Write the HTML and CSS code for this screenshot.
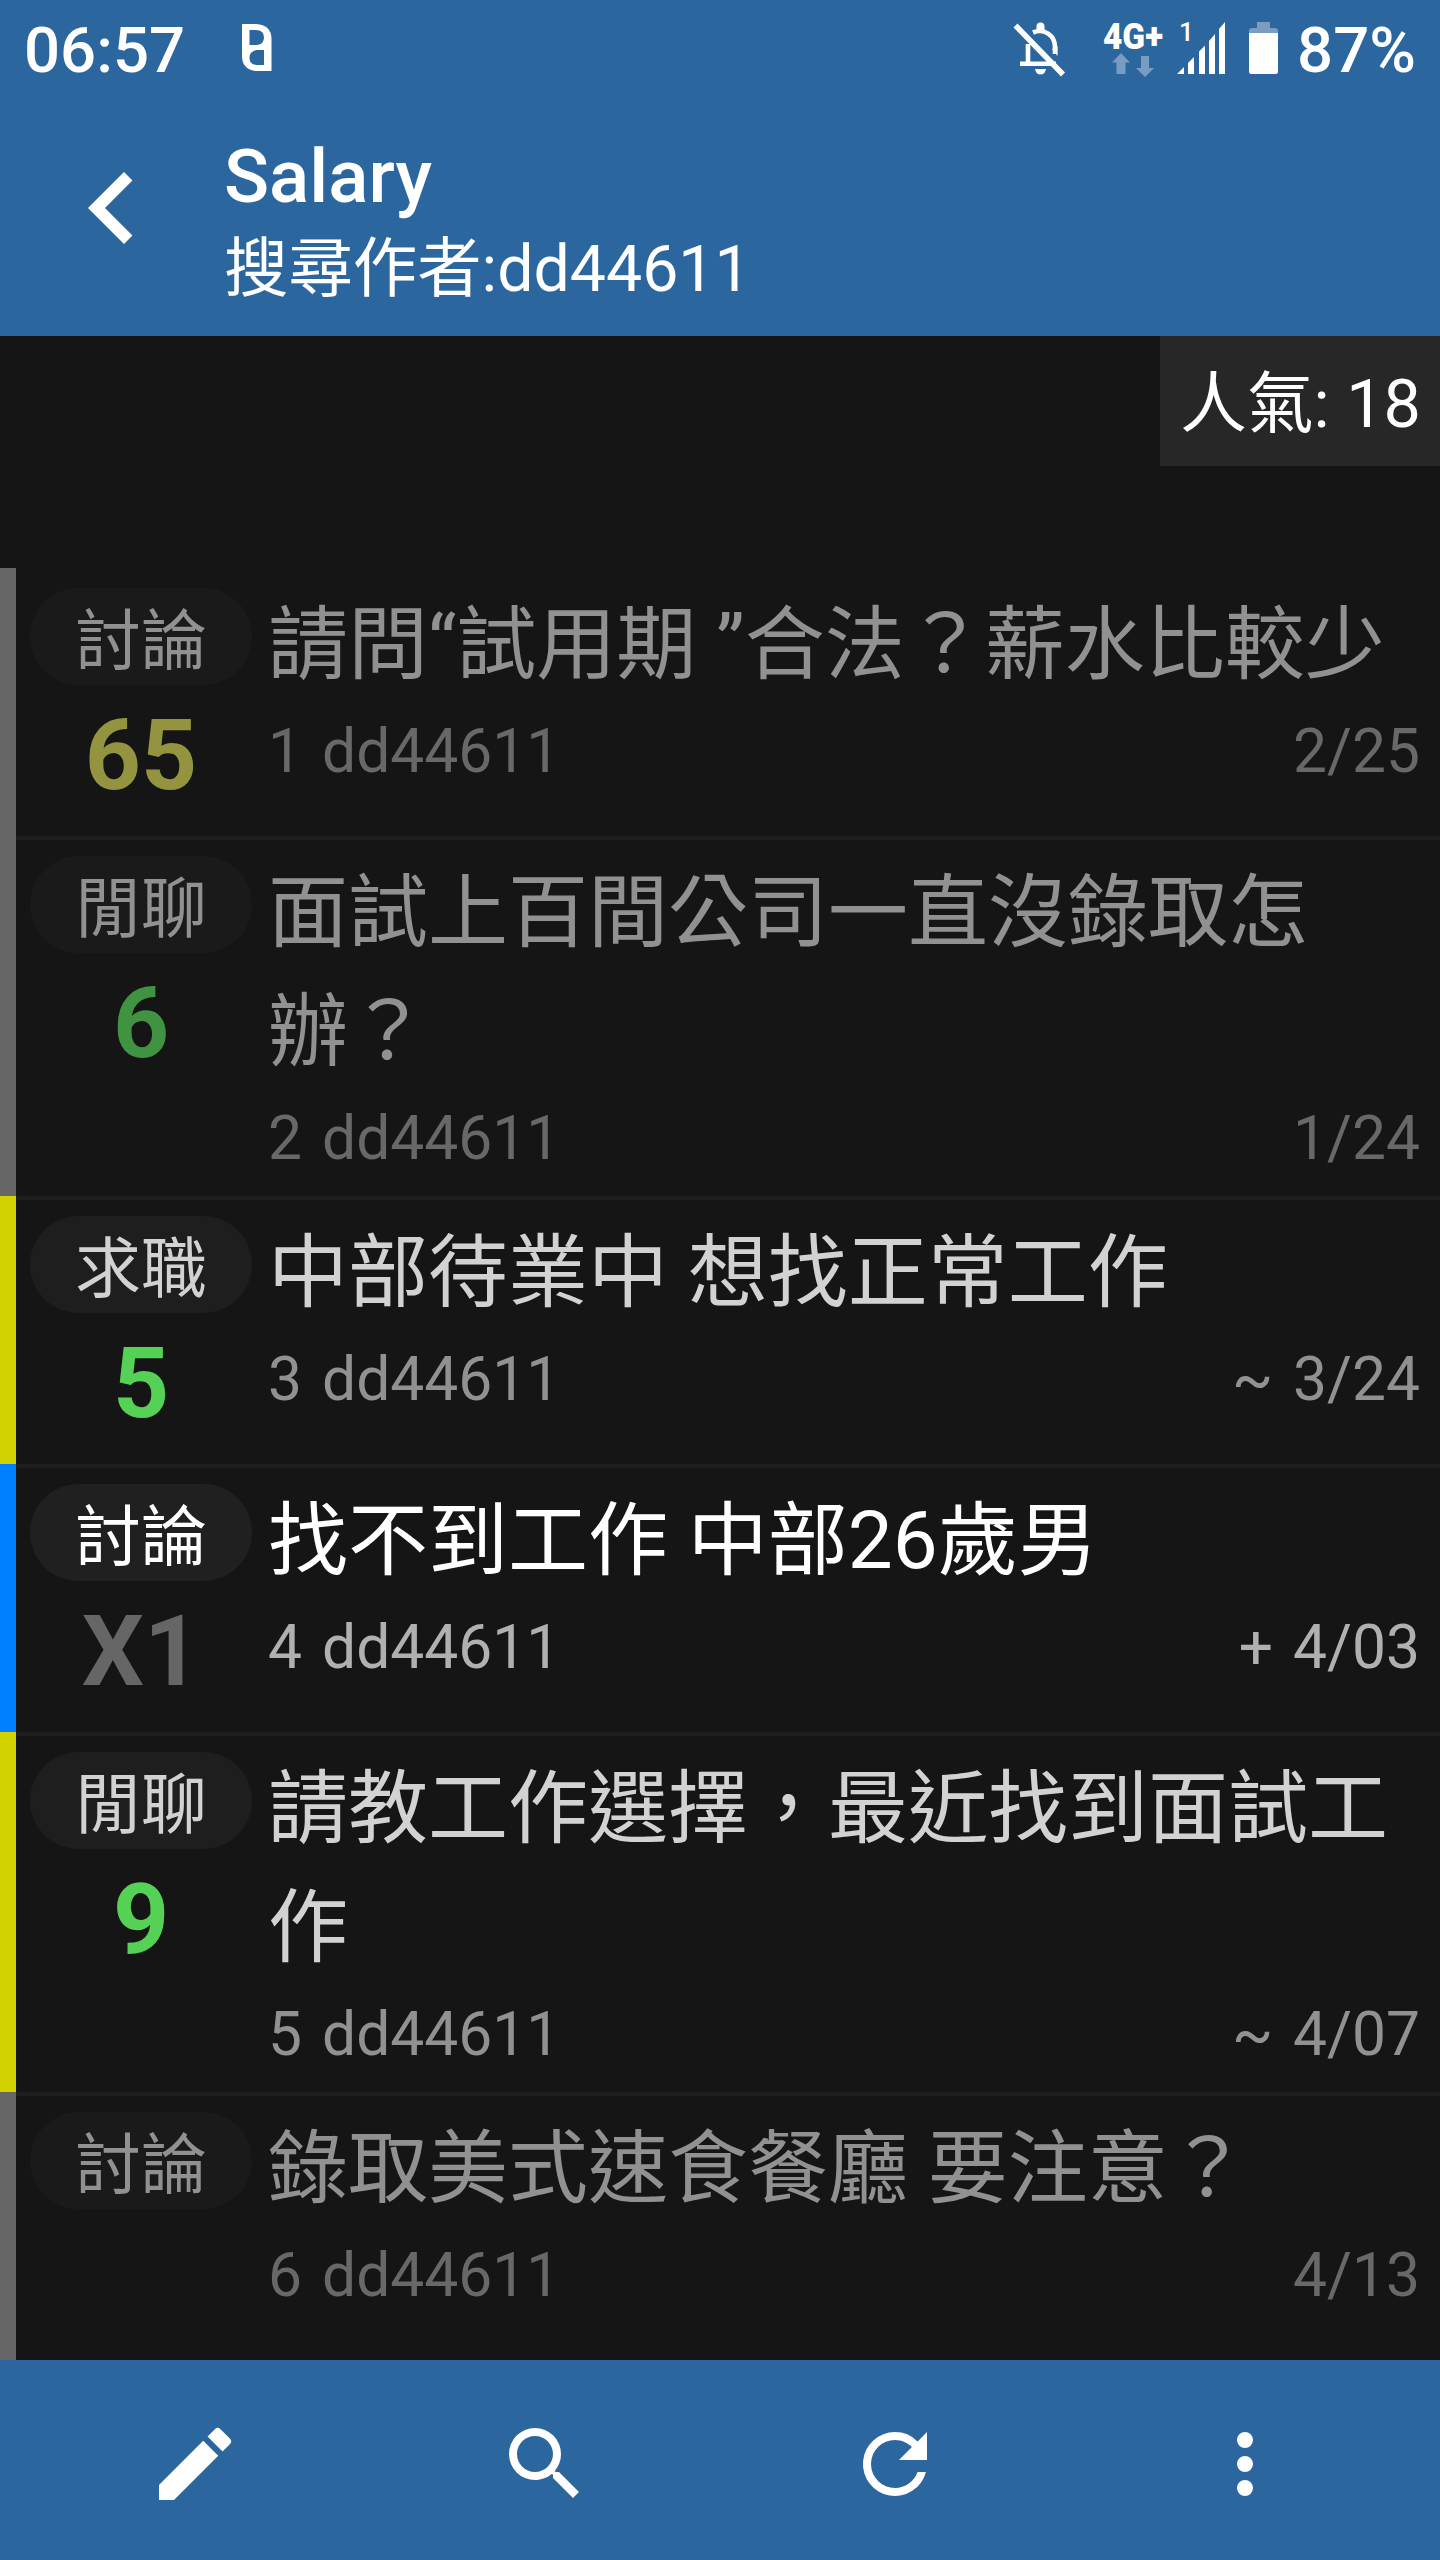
FILE: index.html
```html
<!DOCTYPE html>
<html lang="zh-Hant">
<head>
<meta charset="utf-8">
<title>Salary</title>
<link rel="stylesheet" href="styles.css">
</head>
<body>
<div class="app">
  <div class="status">
    <span class="status-text">06:57</span>
    <svg class="notice" width="30" height="48" viewBox="0 0 30 48"><path fill="#fff" fill-rule="evenodd" d="M0 0H14Q29.500 1 29.500 15V47H15Q0 46 0 32ZM7.500 6V21H15Q22 20 22 13.500Q22 6 14 6ZM22 26H15Q7.500 27 7.500 33.500Q7.500 41 15 41H22Z"/></svg>
    <svg class="bell" width="54" height="56" viewBox="0 0 54 56">
      <g fill="none" stroke="#fff" stroke-width="4.600"><path d="M15 22V41M7 41.700H43M20 10.500C31 6 42 13 42 25V32"/><path stroke-width="5.500" d="M2.500 3.500L50 52.500"/></g>
      <path fill="#fff" d="M23.500 10V4.500a4 4 0 0 1 8 0V10ZM22 47H33Q32 52.500 27.500 52.500T22 47ZM39 27L44.500 34V24Z"/>
    </svg>
    <svg class="network" width="65" height="72" viewBox="-2 -16 65 72">
      <text class="net-label" x="0" y="27" textLength="60" lengthAdjust="spacingAndGlyphs">4G+</text>
      <path fill="#799dc2" d="M18 31L27 40.500H22.500V52H13.500V40.500H9ZM38 34H46V46H51L42 55L33 46H38Z"/>
    </svg>
    <svg class="signal" width="49" height="61" viewBox="0 -8 49 61">
      <text class="sim-label" x="2" y="19">1</text>
      <path fill="#fff" d="M0 52L7 45V52ZM11 41L17 35V52H11ZM22 29.500L28 23.500V52H22ZM32 19L38 12V52H32ZM42 7L48 0V52H42Z"/>
    </svg>
    <svg class="battery" width="30" height="53" viewBox="0 0 30 53"><path fill="#799dc2" d="M8 0H21V6H26Q29 6 29 9V12H0V9Q0 6 3 6H8Z"/><path fill="#fff" d="M0 11H29V49.500Q29 52 26.500 52H2.500Q0 52 0 49.500Z"/></svg>
    <span class="status-text">87%</span>
  </div>
  <header class="header">
    <svg class="back" width="144" height="144" viewBox="0 0 24 24"><path fill="#fff" d="M15.410 7.410L14 6l-6 6 6 6 1.410-1.410L10.830 12z"/></svg>
    <div class="heading">
      <h1 class="board">Salary</h1>
      <div class="query">搜尋作者:dd44611</div>
    </div>
  </header>
  <main class="content">
    <div class="popularity">人氣: 18</div>
    <div class="list">
      <article class="row read">
        <div class="side"><span class="tag">討論</span><span class="count yellow">65</span></div>
        <div class="body"><h2 class="title">請問“試用期 ”合法？薪水比較少</h2><div class="meta"><span>1</span><span>dd44611</span><span class="date">2/25</span></div></div>
      </article>
      <article class="row read">
        <div class="side"><span class="tag">閒聊</span><span class="count green">6</span></div>
        <div class="body"><h2 class="title">面試上百間公司一直沒錄取怎辦？</h2><div class="meta"><span>2</span><span>dd44611</span><span class="date">1/24</span></div></div>
      </article>
      <article class="row updated">
        <div class="side"><span class="tag">求職</span><span class="count green">5</span></div>
        <div class="body"><h2 class="title">中部待業中 想找正常工作</h2><div class="meta"><span>3</span><span>dd44611</span><span class="mark">~</span><span>3/24</span></div></div>
      </article>
      <article class="row unread">
        <div class="side"><span class="tag">討論</span><span class="count gray">X1</span></div>
        <div class="body"><h2 class="title">找不到工作 中部26歲男</h2><div class="meta"><span>4</span><span>dd44611</span><span class="mark">+</span><span>4/03</span></div></div>
      </article>
      <article class="row updated">
        <div class="side"><span class="tag">閒聊</span><span class="count green">9</span></div>
        <div class="body"><h2 class="title">請教工作選擇，最近找到面試工作</h2><div class="meta"><span>5</span><span>dd44611</span><span class="mark">~</span><span>4/07</span></div></div>
      </article>
      <article class="row read">
        <div class="side"><span class="tag">討論</span></div>
        <div class="body"><h2 class="title">錄取美式速食餐廳 要注意？</h2><div class="meta"><span>6</span><span>dd44611</span><span class="date">4/13</span></div></div>
      </article>
    </div>
  </main>
  <nav class="toolbar">
    <svg width="96" height="96" viewBox="0 0 24 24"><path d="M3 17.250V21h3.750L17.810 9.940l-3.750-3.750L3 17.250zM20.710 7.040a1 1 0 0 0 0-1.410l-2.340-2.340a1 1 0 0 0-1.410 0l-1.830 1.830 3.750 3.750 1.830-1.830z"/></svg>
    <svg width="96" height="96" viewBox="0 0 24 24"><path d="M15.500 14h-.79l-.28-.27A6.471 6.471 0 0 0 16 9.500 6.500 6.500 0 1 0 9.500 16c1.610 0 3.090-.59 4.230-1.570l.27.28v.79l5 4.990L20.490 19l-4.990-5zm-6 0C7.010 14 5 11.990 5 9.500S7.010 5 9.500 5 14 7.010 14 9.500 11.990 14 9.500 14z"/></svg>
    <svg width="96" height="96" viewBox="0 0 24 24"><path d="M17.650 6.350A7.958 7.958 0 0 0 12 4a8 8 0 1 0 7.730 10h-2.080A5.990 5.990 0 0 1 12 18a6 6 0 1 1 0-12c1.660 0 3.140.69 4.220 1.780L13 11h7V4l-2.350 2.350z"/></svg>
    <svg width="96" height="96" viewBox="0 0 24 24"><path d="M12 8a2 2 0 1 0 0-4 2 2 0 0 0 0 4zm0 2a2 2 0 1 0 0 4 2 2 0 0 0 0-4zm0 6a2 2 0 1 0 0 4 2 2 0 0 0 0-4z"/></svg>
  </nav>
</div>
</body>
</html>
```
FILE: styles.css
```css
* { box-sizing: border-box; }
body { margin: 0; background: #151515; }
svg { display: block; flex: none; }
.app {
  width: 1440px;
  height: 2560px;
  display: flex;
  flex-direction: column;
  overflow: hidden;
  color: #fff;
  font-family: Roboto, "Noto Sans CJK TC", sans-serif;
}

.status {
  height: 100px;
  padding: 0 24px 0 24px;
  display: flex;
  align-items: flex-start;
  background: #2b669e;
}
.status-text {
  font-size: 63.5px;
  font-weight: 500;
  line-height: 102px;
}
.notice { margin: 24px 0 0 57px; }
.bell { margin: 22px 0 0 auto; }
.network { margin: 6px 0 0 34px; }
.signal { margin: 14px 0 0 11px; }
.battery { margin: 22px 18px 0 23px; }
.net-label {
  fill: #fff;
  font-size: 37px;
  font-weight: 900;
}
.sim-label {
  fill: #fff;
  font-size: 26px;
  font-weight: 500;
}

.header {
  height: 236px;
  padding-left: 40px;
  display: flex;
  align-items: flex-start;
  background: #2b669e;
}
.back { margin-top: 36px; }
.heading { padding: 34px 0 0 40px; }
.board {
  margin: 0;
  font-size: 74.5px;
  font-weight: 500;
  line-height: 86px;
}
.query {
  margin-top: 3px;
  font-size: 64.4px;
  line-height: 92px;
}

.content {
  height: 2024px;
  display: flex;
  flex-direction: column;
}
.popularity {
  align-self: flex-end;
  width: 280px;
  height: 130px;
  padding-right: 19px;
  background: #272727;
  font-size: 66.6px;
  line-height: 137px;
  text-align: right;
  white-space: nowrap;
}
.list { margin-top: 102px; }

.row {
  min-height: 268px;
  padding: 0 20px 22px 14px;
  display: flex;
  border-left: 16px solid #666;
  box-shadow: inset 0 4px #1d1d1d;
}
.row:first-child { box-shadow: none; }
.side {
  width: 222px;
  padding-top: 20px;
  display: flex;
  flex-direction: column;
  align-items: stretch;
  text-align: center;
}
.tag {
  height: 97px;
  border-radius: 49px;
  font-size: 66px;
  line-height: 108px;
}
.count {
  height: 115px;
  margin: 13px 0 -20px;
  font-size: 98px;
  font-weight: 700;
  line-height: 115px;
}
.body {
  flex: 1;
  margin-left: 16px;
  padding-top: 18px;
}
.title {
  margin: 0;
  font-size: 80px;
  font-weight: 400;
  line-height: 119px;
}
.meta {
  margin-top: 11px;
  display: flex;
  gap: 20px;
  font-size: 60.5px;
  line-height: 71px;
}
.date, .mark { margin-left: auto; }

.read { color: #919191; }
.read .tag { background: #1a1a1a; }
.read .meta { color: #686868; }
.read .yellow { color: #939340; }
.read .green { color: #409340; }

.updated { border-left-color: #d2d200; color: #d2d2d2; }
.updated .tag { background: #1e1e1e; }
.updated .meta { color: #919191; }
.updated .green { color: #55d255; }

.unread { border-left-color: #0080ff; color: #fff; }
.unread .tag { background: #202020; }
.unread .meta { color: #b0b0b0; }
.unread .gray { color: #666; }

.toolbar {
  height: 200px;
  padding: 8px 20px 0;
  display: grid;
  grid-template-columns: repeat(4, 350px);
  place-items: center;
  background: #2b669e;
  fill: #fff;
}
```
